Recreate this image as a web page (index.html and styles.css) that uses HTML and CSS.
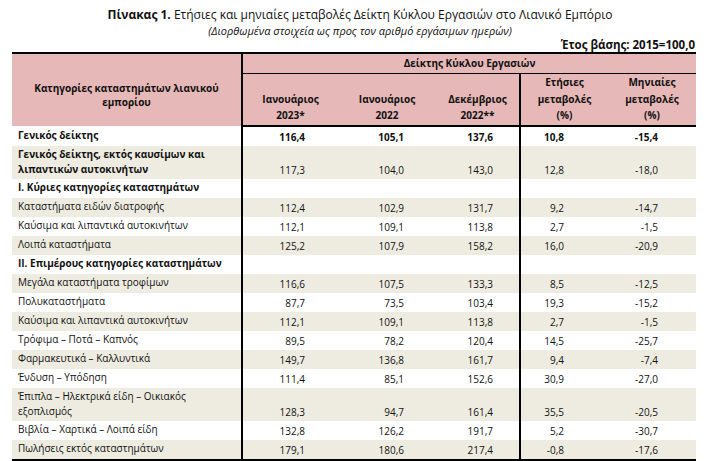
FILE: index.html
```html
<!DOCTYPE html>
<html lang="el">
<head>
<meta charset="utf-8">
<link rel="stylesheet" href="styles.css">
</head>
<body>
<div class="page">
  <div class="title"><b>Πίνακας 1.</b> Ετήσιες και μηνιαίες μεταβολές Δείκτη Κύκλου Εργασιών στο Λιανικό Εμπόριο</div>
  <div class="subtitle">(Διορθωμένα στοιχεία ως προς τον αριθμό εργάσιμων ημερών)</div>
  <div class="base">Έτος βάσης: 2015=100,0</div>
  <table class="tbl">
    <colgroup>
      <col class="c-label"><col class="c-n1"><col class="c-n2"><col class="c-n3"><col class="c-p1"><col class="c-p2">
    </colgroup>
    <thead>
      <tr class="h1">
        <th rowspan="2" class="hlabel">Κατηγορίες καταστημάτων λιανικού<br>εμπορίου</th>
        <th colspan="5" class="hgroup">Δείκτης Κύκλου Εργασιών</th>
      </tr>
      <tr class="h2">
        <th class="sep">Ιανουάριος<br>2023*</th>
        <th>Ιανουάριος<br>2022</th>
        <th>Δεκέμβριος<br>2022**</th>
        <th class="sep">Ετήσιες<br>μεταβολές<br>(%)</th>
        <th>Μηνιαίες<br>μεταβολές<br>(%)</th>
      </tr>
    </thead>
    <tbody>
      <tr class="bold"><td class="lbl">Γενικός δείκτης</td><td class="n1 sep">116,4</td><td class="n2">105,1</td><td class="n3">137,6</td><td class="p1 sep">10,8</td><td class="p2">-15,4</td></tr>
      <tr class="alt dbl"><td class="lbl b">Γενικός δείκτης, εκτός καυσίμων και<br>λιπαντικών αυτοκινήτων</td><td class="n1 sep">117,3</td><td class="n2">104,0</td><td class="n3">143,0</td><td class="p1 sep">12,8</td><td class="p2">-18,0</td></tr>
      <tr><td class="lbl b">Ι. Κύριες κατηγορίες καταστημάτων</td><td class="n1 sep"></td><td class="n2"></td><td class="n3"></td><td class="p1 sep"></td><td class="p2"></td></tr>
      <tr class="alt"><td class="lbl">Καταστήματα ειδών διατροφής</td><td class="n1 sep">112,4</td><td class="n2">102,9</td><td class="n3">131,7</td><td class="p1 sep">9,2</td><td class="p2">-14,7</td></tr>
      <tr><td class="lbl">Καύσιμα και λιπαντικά αυτοκινήτων</td><td class="n1 sep">112,1</td><td class="n2">109,1</td><td class="n3">113,8</td><td class="p1 sep">2,7</td><td class="p2">-1,5</td></tr>
      <tr class="alt"><td class="lbl">Λοιπά καταστήματα</td><td class="n1 sep">125,2</td><td class="n2">107,9</td><td class="n3">158,2</td><td class="p1 sep">16,0</td><td class="p2">-20,9</td></tr>
      <tr><td class="lbl b">ΙΙ. Επιμέρους κατηγορίες καταστημάτων</td><td class="n1 sep"></td><td class="n2"></td><td class="n3"></td><td class="p1 sep"></td><td class="p2"></td></tr>
      <tr class="alt"><td class="lbl">Μεγάλα καταστήματα τροφίμων</td><td class="n1 sep">116,6</td><td class="n2">107,5</td><td class="n3">133,3</td><td class="p1 sep">8,5</td><td class="p2">-12,5</td></tr>
      <tr><td class="lbl">Πολυκαταστήματα</td><td class="n1 sep">87,7</td><td class="n2">73,5</td><td class="n3">103,4</td><td class="p1 sep">19,3</td><td class="p2">-15,2</td></tr>
      <tr class="alt"><td class="lbl">Καύσιμα και λιπαντικά αυτοκινήτων</td><td class="n1 sep">112,1</td><td class="n2">109,1</td><td class="n3">113,8</td><td class="p1 sep">2,7</td><td class="p2">-1,5</td></tr>
      <tr><td class="lbl">Τρόφιμα – Ποτά – Καπνός</td><td class="n1 sep">89,5</td><td class="n2">78,2</td><td class="n3">120,4</td><td class="p1 sep">14,5</td><td class="p2">-25,7</td></tr>
      <tr class="alt"><td class="lbl">Φαρμακευτικά – Καλλυντικά</td><td class="n1 sep">149,7</td><td class="n2">136,8</td><td class="n3">161,7</td><td class="p1 sep">9,4</td><td class="p2">-7,4</td></tr>
      <tr><td class="lbl">Ένδυση – Υπόδηση</td><td class="n1 sep">111,4</td><td class="n2">85,1</td><td class="n3">152,6</td><td class="p1 sep">30,9</td><td class="p2">-27,0</td></tr>
      <tr class="alt dbl"><td class="lbl">Έπιπλα – Ηλεκτρικά είδη – Οικιακός<br>εξοπλισμός</td><td class="n1 sep">128,3</td><td class="n2">94,7</td><td class="n3">161,4</td><td class="p1 sep">35,5</td><td class="p2">-20,5</td></tr>
      <tr><td class="lbl">Βιβλία – Χαρτικά – Λοιπά είδη</td><td class="n1 sep">132,8</td><td class="n2">126,2</td><td class="n3">191,7</td><td class="p1 sep">5,2</td><td class="p2">-30,7</td></tr>
      <tr class="alt"><td class="lbl">Πωλήσεις εκτός καταστημάτων</td><td class="n1 sep">179,1</td><td class="n2">180,6</td><td class="n3">217,4</td><td class="p1 sep">-0,8</td><td class="p2">-17,6</td></tr>
    </tbody>
  </table>
</div>
</body>
</html>
```

FILE: styles.css
```css
html, body {
  margin: 0;
  padding: 0;
  background: #ffffff;
}

body {
  font-family: "Open Sans", "Noto Sans", sans-serif;
  color: #111111;
  font-size: 10px;
}

.page {
  width: 684px;
  padding: 8px 0 0 12px;
}

.title {
  text-align: center;
  font-size: 12px;
  line-height: 14px;
  padding-left: 12px;
}

.subtitle {
  text-align: center;
  font-style: italic;
  font-size: 11px;
  line-height: 13px;
  margin-top: 2px;
  padding-left: 12px;
}

.base {
  text-align: right;
  font-weight: bold;
  font-size: 11.5px;
  line-height: 15px;
  padding: 0 1px 0 0;
}

.tbl {
  width: 684px;
  border-collapse: collapse;
  table-layout: fixed;
  border-top: 2px solid #000;
  border-bottom: 2px solid #000;
}

.c-label { width: 230px; }
.c-n1 { width: 96px; }
.c-n2 { width: 98px; }
.c-n3 { width: 84px; }
.c-p1 { width: 88px; }
.c-p2 { width: 88px; }

.tbl th {
  background: #e6b8b7;
  font-weight: bold;
  text-align: center;
  padding: 0;
  line-height: 16.5px;
}

.tbl thead tr.h1 th {
  height: 19px;
}

.hgroup {
  border-bottom: 1px solid #000;
  border-left: 2px solid #000;
  vertical-align: middle;
}

.tbl th.hlabel {
  vertical-align: middle;
  line-height: 14px;
  padding-top: 10px;
}

.tbl thead tr.h2 th {
  height: 48px;
  vertical-align: bottom;
  padding-bottom: 1px;
  border-bottom: 2px solid #000;
}

.tbl thead tr.h2 th.sep {
  border-left: 2px solid #000;
}

.tbl td {
  padding: 0;
  height: 18px;
  line-height: 15px;
  vertical-align: bottom;
  white-space: nowrap;
}

.tbl tr.dbl td {
  height: 32px;
}

.tbl tr.alt td {
  background: #eeece1;
}

.tbl td.sep {
  border-left: 2px solid #000;
}

.tbl td.lbl {
  text-align: left;
  padding-left: 6px;
  padding-bottom: 1px;
  vertical-align: middle;
}

.b, .bold td {
  font-weight: bold;
}

.n1, .n2, .n3, .p1, .p2 {
  text-align: right;
}

.tbl td.n1, .tbl td.n2, .tbl td.n3, .tbl td.p1, .tbl td.p2 {
  padding-bottom: 1px;
}

.tbl td.n1 { padding-right: 33px; }
.tbl td.n2 { padding-right: 32px; }
.tbl td.n3 { padding-right: 26px; }
.tbl td.p1 { padding-right: 44px; }
.tbl td.p2 { padding-right: 38px; }
```
